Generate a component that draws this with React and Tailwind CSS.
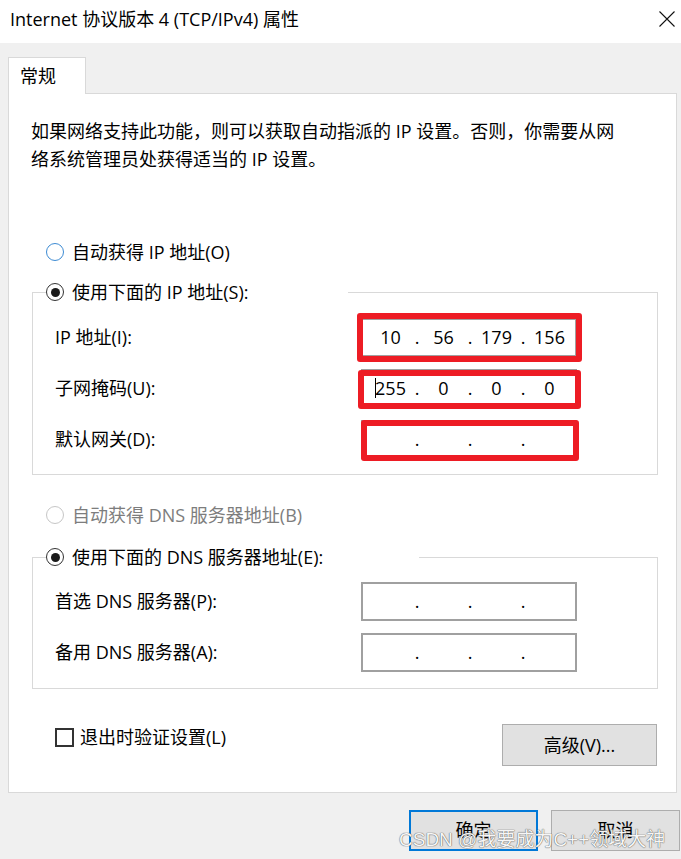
import React from "react";

const ui = "font-['Open_Sans','Noto_Sans_CJK_SC',sans-serif] text-[18px] text-black";

function Radio({ label, checked, disabled, hover }) {
  const ring = disabled
    ? "border-[#c6c6c6]"
    : hover
    ? "border-[#3d8bd3]"
    : "border-[#333333]";
  return (
    <div className="flex h-6 items-center">
      <span
        className={`flex h-[18px] w-[18px] shrink-0 items-center justify-center rounded-full border-[1.5px] bg-white ${ring}`}
      >
        {checked && <span className="h-[9px] w-[9px] rounded-full bg-[#1a1a1a]" />}
      </span>
      <span className={`ml-[8px] whitespace-nowrap ${disabled ? "text-[#7d7d7d]" : ""}`}>{label}</span>
    </div>
  );
}

function IpField({ octets = ["", "", "", ""], cursor }) {
  return (
    <div className="flex h-[39px] w-[216px] items-center border-2 border-[#a0a0a0] bg-white pl-[4px]">
      {octets.map((o, i) => (
        <React.Fragment key={i}>
          {i > 0 && <span className="w-[6px] text-center">.</span>}
          <span className="w-[47px] text-center">
            {cursor && i === 0 && <span className="-mr-px inline-block h-[20px] w-px translate-y-[3px] bg-black" />}
            {o}
          </span>
        </React.Fragment>
      ))}
    </div>
  );
}

function Row({ label, children }) {
  return (
    <div className="flex h-[39px] items-center">
      <span className="w-[306px] whitespace-nowrap">{label}</span>
      {children}
    </div>
  );
}

// red marker boxes from the screenshot annotation
function Marked({ box, children }) {
  return (
    <div className="relative">
      {children}
      <span className={`pointer-events-none absolute rounded-[3px] border-[6px] border-[#ed1c24] ${box}`} />
    </div>
  );
}

export default function App() {
  return (
    <div className={`relative h-[859px] w-[681px] overflow-hidden bg-[#f0f0f0] ${ui}`}>
      {/* Title bar */}
      <div className="flex h-[43px] items-center justify-between bg-white pb-[4px] pl-[10px] pr-[6px]">
        <span className="whitespace-nowrap">Internet 协议版本 4 (TCP/IPv4) 属性</span>
        <svg width="16" height="16" viewBox="0 0 16 16" className="mb-[1px]">
          <path d="M0.5 0.5 L15.5 15.5 M15.5 0.5 L0.5 15.5" stroke="#111" strokeWidth="1.1" fill="none" />
        </svg>
      </div>

      <div className="pl-[8px] pr-[4px] pt-[14px]">
        {/* Tab */}
        <div className="relative z-10 -mb-px flex h-[37px] w-[78px] items-center border border-b-0 border-[#d9d9d9] bg-white pl-[11px]">
          常规
        </div>

        {/* Panel */}
        <div className="h-[700px] border border-[#d9d9d9] bg-white pl-[22px] pt-[23px]">
          <p className="whitespace-nowrap leading-[28px]">
            如果网络支持此功能，则可以获取自动指派的 IP 设置。否则，你需要从网
            <br />
            络系统管理员处获得适当的 IP 设置。
          </p>

          <div className="ml-[15px] mt-[67px]">
            <Radio label="自动获得 IP 地址(O)" hover />
          </div>

          <fieldset className="ml-[1px] mt-[16px] w-[626px] border border-[#d9d9d9]">
            <legend className="ml-[13px] w-[302px] bg-white">
              <Radio label="使用下面的 IP 地址(S):" checked />
            </legend>
            <div className="flex flex-col gap-[12px] pb-[15px] pl-[22px] pt-[14px]">
              <Row label="IP 地址(I):">
                <Marked box="-left-[4px] -right-[5px] -top-[5px] -bottom-[5px]">
                  <IpField octets={["10", "56", "179", "156"]} />
                </Marked>
              </Row>
              <Row label="子网掩码(U):">
                <Marked box="-left-[3px] -right-[4px] top-[1px] -bottom-[1px]">
                  <IpField octets={["255", "0", "0", "0"]} cursor />
                </Marked>
              </Row>
              <Row label="默认网关(D):">
                <Marked box="left-0 -right-[2px] top-0 -bottom-[2px]">
                  <IpField />
                </Marked>
              </Row>
            </div>
          </fieldset>

          <div className="ml-[15px] mt-[28px]">
            <Radio label="自动获得 DNS 服务器地址(B)" disabled />
          </div>

          <fieldset className="ml-[1px] mt-[18px] w-[626px] border border-[#d9d9d9]">
            <legend className="ml-[13px] w-[373px] bg-white">
              <Radio label="使用下面的 DNS 服务器地址(E):" checked />
            </legend>
            <div className="flex flex-col gap-[12px] pb-[16px] pl-[22px] pt-[13px]">
              <Row label="首选 DNS 服务器(P):">
                <IpField />
              </Row>
              <Row label="备用 DNS 服务器(A):">
                <IpField />
              </Row>
            </div>
          </fieldset>

          <div className="ml-[24px] mt-[35px] flex w-[602px] items-start justify-between">
            <label className="mt-[1px] flex h-6 items-center">
              <span className="h-[19px] w-[19px] border-2 border-[#333333] bg-white" />
              <span className="ml-[6px] whitespace-nowrap">退出时验证设置(L)</span>
            </label>
            <button className="h-[42px] w-[155px] border border-[#adadad] bg-[#e1e1e1]">高级(V)...</button>
          </div>
        </div>
      </div>

      {/* Dialog buttons */}
      <div className="mt-[17px] flex justify-end gap-[13px] pr-px">
        <button className="h-[41px] w-[129px] border-2 border-[#0078d7] bg-[#e1e1e1]">确定</button>
        <button className="h-[41px] w-[129px] border border-[#adadad] bg-[#e1e1e1]">取消</button>
      </div>

      {/* watermark */}
      <span className="pointer-events-none absolute left-[399px] top-[826px] whitespace-nowrap font-['Liberation_Sans','Noto_Sans_CJK_SC',sans-serif] text-[19px] leading-[28px] text-[#f6f6f6] [text-shadow:0_0_1px_#5a5a5a,0_0_1px_#5a5a5a]">
        CSDN @我要成为C++领域大神
      </span>
    </div>
  );
}
